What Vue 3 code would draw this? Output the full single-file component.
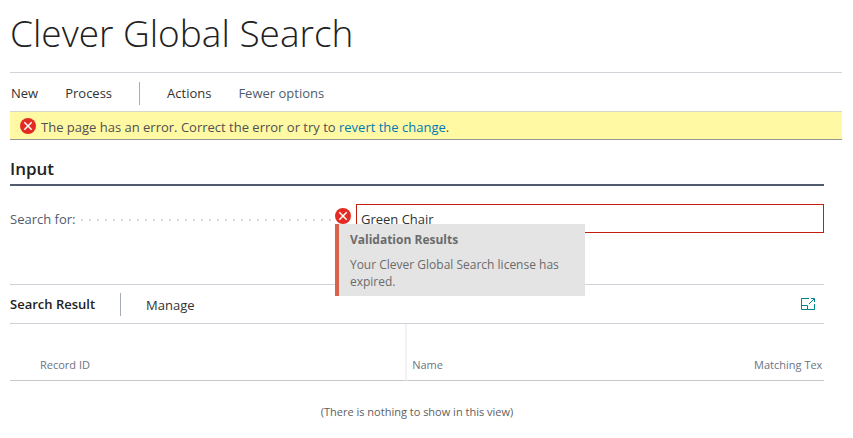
<script setup>
import { ref } from 'vue'

const query = ref('Green Chair')
const actions = ['New', 'Process']
</script>

<template>
  <main class="page">
    <h1 class="title">Clever Global Search</h1>

    <nav class="toolbar" aria-label="Page actions">
      <button v-for="a in actions" :key="a" type="button" class="action">{{ a }}</button>
      <span class="divider"></span>
      <button type="button" class="action">Actions</button>
      <button type="button" class="action muted">Fewer options</button>
    </nav>

    <div class="notice" role="alert">
      <svg class="error-icon" viewBox="0 0 16 16" aria-hidden="true">
        <circle cx="8" cy="8" r="8" />
        <path d="M4.3 4.3l7.4 7.4M11.7 4.3l-7.4 7.4" />
      </svg>
      <p>The page has an error. Correct the error or try to <a href="#">revert the change</a>.</p>
    </div>

    <div class="content">
      <section>
        <h2 class="group-title">Input</h2>
        <div class="field">
          <div class="caption">
            <label for="search">Search for:</label>
            <span class="leader"></span>
            <span class="error-anchor">
              <svg class="error-icon" viewBox="0 0 16 16" aria-hidden="true">
                <circle cx="8" cy="8" r="8" />
                <path d="M4.3 4.3l7.4 7.4M11.7 4.3l-7.4 7.4" />
              </svg>
              <span id="validation" class="tooltip" role="tooltip">
                <strong>Validation Results</strong>
                <span>Your Clever Global Search license has expired.</span>
              </span>
            </span>
          </div>
          <input id="search" v-model="query" type="text" aria-invalid="true" aria-describedby="validation" />
        </div>
      </section>

      <section class="results">
        <header class="results-bar">
          <h2>Search Result</h2>
          <span class="divider"></span>
          <button type="button" class="action">Manage</button>
          <button type="button" class="expand" aria-label="Expand">
            <svg viewBox="0 0 16 14" aria-hidden="true">
              <path d="M9 1.5H1.5v11h13V7M1.5 8.5h6v4" />
              <path d="M9 7l5-5M11 1.5h3.5V5" />
            </svg>
          </button>
        </header>
        <table>
          <colgroup>
            <col class="col-id" />
            <col class="col-name" />
            <col />
          </colgroup>
          <thead>
            <tr>
              <th scope="col">Record ID</th>
              <th scope="col">Name</th>
              <th scope="col">Matching Tex</th>
            </tr>
          </thead>
          <tbody>
            <tr>
              <td colspan="3">(There is nothing to show in this view)</td>
            </tr>
          </tbody>
        </table>
      </section>
    </div>
  </main>
</template>

<style>
body {
  margin: 0;
  background: #fff;
}
</style>

<style scoped>
.page {
  padding: 0 11px 0 10px;
  font-family: "Open Sans", "Noto Sans", sans-serif;
  font-size: 13px;
  line-height: 18px;
  color: #323232;
}

h1, h2, p {
  margin: 0;
}

.title {
  padding: 7px 0 13px;
  font-size: 37px;
  font-weight: 300;
  line-height: 52px;
  color: #212121;
}

button {
  padding: 0;
  border: 0;
  background: none;
  font: inherit;
  color: inherit;
  cursor: pointer;
}

.toolbar {
  display: flex;
  align-items: center;
  gap: 27px;
  box-sizing: border-box;
  height: 39px;
  padding: 2px 0 0 1px;
  border-top: 1px solid #d0d3d8;
}

.divider {
  width: 1px;
  height: 23px;
  background: #a6adb8;
}

.action.muted {
  color: #505c6d;
}

.notice {
  display: flex;
  align-items: center;
  gap: 5px;
  height: 27px;
  padding-left: 10px;
  border-top: 1px solid #d5d7cb;
  border-bottom: 1px solid #949494;
  background: #fff9a3;
  color: #505050;
}

.notice p {
  padding-top: 3px;
}

.notice a {
  color: #0078b5;
  text-decoration: none;
}

.error-icon {
  display: block;
  flex: none;
  width: 16px;
  height: 16px;
}

.error-icon circle {
  fill: #e32b22;
}

.error-icon path {
  fill: none;
  stroke: #fff;
  stroke-width: 1.5;
}

.content {
  margin-right: 18px;
}

.group-title {
  padding: 17px 0 3px;
  border-bottom: 2px solid #505c6d;
  font-size: 17px;
  font-weight: 600;
  line-height: 24px;
  color: #212121;
}

.field {
  display: grid;
  grid-template-columns: 42.5% 1fr;
  padding: 18px 0 51px;
}

.caption {
  display: flex;
  align-items: center;
  color: #505c6d;
}

.leader {
  flex: 1;
  height: 2px;
  margin: 2px 4px 0 6px;
  background: repeating-linear-gradient(90deg, #d9d9d9 0 2px, transparent 2px 8px);
}

.error-anchor {
  position: relative;
  align-self: flex-start;
  padding-top: 4px;
  margin-right: 5px;
}

.tooltip {
  position: absolute;
  top: 20px;
  left: 0;
  z-index: 1;
  display: grid;
  gap: 8px;
  box-sizing: border-box;
  width: 250px;
  padding: 7px 10px 6px 11px;
  border-left: 4px solid #d9624a;
  background: #e4e4e4;
  font-size: 12px;
  line-height: 17px;
  color: #6b6b6b;
}

.tooltip strong {
  font-weight: 700;
}

input {
  box-sizing: border-box;
  width: 100%;
  height: 29px;
  padding: 0 4px;
  border: 1px solid #c0200c;
  border-radius: 0;
  outline: 0;
  background: #fff;
  font: inherit;
  color: #323232;
}

.results-bar {
  display: flex;
  align-items: center;
  gap: 25px;
  height: 38px;
  border-top: 1px solid #d0d1d8;
  border-bottom: 1px solid #d0d1d8;
}

.results-bar h2 {
  font-size: 13px;
  font-weight: 600;
  line-height: 18px;
  color: #212121;
}

.results-bar .action {
  padding-top: 2px;
}

.expand {
  margin-left: auto;
  margin-right: 8px;
}

.expand svg {
  display: block;
  width: 16px;
  height: 14px;
}

.expand path {
  fill: none;
  stroke: #00848c;
}

table {
  width: 100%;
  table-layout: fixed;
  border-collapse: separate;
  border-spacing: 0;
}

.col-id {
  width: 48.8%;
}

.col-name {
  width: 42%;
}

th {
  box-sizing: border-box;
  height: 57px;
  padding: 0 0 6px 5px;
  border-bottom: 1px solid #c8c8c8;
  font-size: 11px;
  font-weight: 400;
  line-height: 18px;
  text-align: left;
  vertical-align: bottom;
  white-space: nowrap;
  color: #6a7482;
}

th:first-child {
  padding-left: 30px;
  border-right: 2px solid #f2f2f2;
}

td {
  padding: 22px 0 16px;
  font-size: 11px;
  line-height: 18px;
  text-align: center;
  color: #606060;
}
</style>
